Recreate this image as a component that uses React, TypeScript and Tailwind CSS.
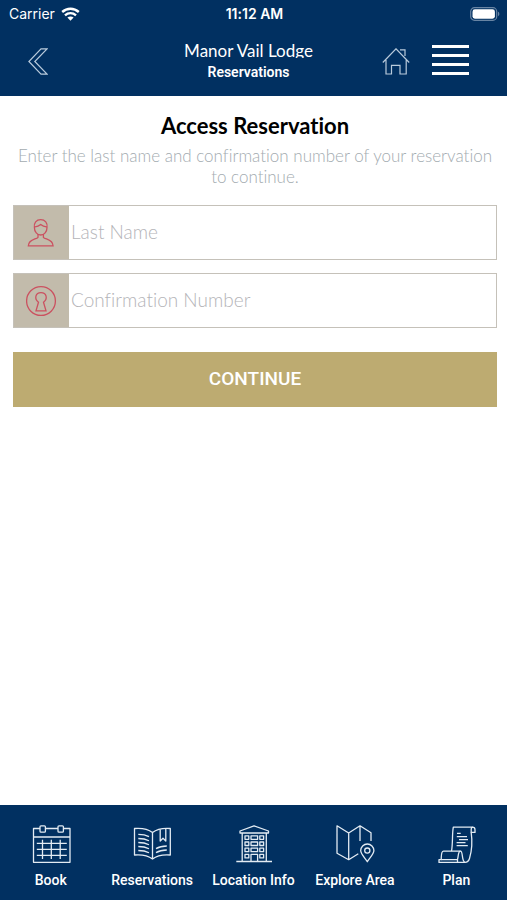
import type { ReactNode } from "react";
import { useState } from "react";

const tabs: { label: string; icon: ReactNode }[] = [
  {
    label: "Book",
    icon: (
      <>
        <path d="M9 4.5H2.5V38.3H39V4.5H32.5M14.5 4.5H27M2.5 13H39" />
        <rect x="9" y="1.8" width="5.4" height="6.4" rx="1" />
        <rect x="27" y="1.8" width="5.4" height="6.4" rx="1" />
        <path d="M11.5 15.8V35M20.3 15.8V35M29.2 15.8V35M5.8 19.3H35.8M5.8 25.4H35.8M5.8 31.4H35.8" />
      </>
    ),
  },
  {
    label: "Reservations",
    icon: (
      <>
        <path d="M20.5 8.5C16 5 9 4 2.5 4.5V31C9 30.5 16 31.5 20.5 35C25 31.5 32 30.5 38.3 31V4.5C32 4 25 5 20.5 8.5V35" />
        <path d="M6.3 10.3C10 10.3 14 11 17 12.6M6.3 14.5C10 14.5 14 15.2 17 16.8M6.3 18.5C10 18.5 14 19.2 17 20.8M6.3 22.5C10 22.5 14 23.2 17 24.8M6.3 26.5C10 26.5 14 27.2 17 28.8" />
        <path d="M28.2 5.5V17L31 14.2L33.8 17V4.6M24 24.6C27 22.8 31 22 34.8 22M24 28.6C27 26.8 31 26 34.8 26" />
      </>
    ),
  },
  {
    label: "Location Info",
    icon: (
      <>
        <path d="M7 9V7L21 1.8L35.5 7V9ZM9.2 9V37.3M33.3 9V37.3M3.3 37.5H39" />
        <path d="M12 11.8H15.8V15.3H12ZM18 11.8H24.6V15.3H18ZM26.8 11.8H30.6V15.3H26.8ZM12 18H15.8V21.5H12ZM18 18H24.6V21.5H18ZM26.8 18H30.6V21.5H26.8ZM12 24.2H15.8V27.7H12ZM18 24.2H24.6V27.7H18ZM26.8 24.2H30.6V27.7H26.8ZM12 30.4H15.8V33.9H12ZM26.8 30.4H30.6V33.9H26.8ZM18 37.3V30.4H24.6V37.3" />
      </>
    ),
  },
  {
    label: "Explore Area",
    icon: (
      <>
        <path d="M23.3 29.7L13.7 35.7L2 29.2V1.8L13.7 9L25 1.8L36 8.8V17M13.7 9V35.7M25 1.8V17" />
        <path d="M32.3 37.7C29.5 33.5 25.7 30 25.7 26.6A6.6 6.6 0 0 1 38.9 26.6C38.9 30 35 33.5 32.3 37.7Z" />
        <circle cx="32.3" cy="26.6" r="2.6" />
      </>
    ),
  },
  {
    label: "Plan",
    icon: (
      <>
        <path d="M15.5 27.2C17 19 16 10 17.3 3.2H36.5C38 3.2 39 4.2 39 5.8V8.4H35.2V5.6C35.2 4.2 35.6 3.2 36.8 3.2" />
        <path d="M35.2 8.4C36.5 18 35.5 28 33.5 34.5C32.6 37.3 31.4 38.4 29 38.4H3V35.6H5.2C5.4 31.5 5 27.2 7.5 27.2H24.5" />
        <path d="M5.2 35.6H21.5V38.4M21.5 35.6C22.5 32 22 27.2 24.5 27.2C27.2 27.2 25.4 37.5 29 38.4" />
        <path d="M21 9.3H24.7M20.8 12.7H31M23 15.6H32M20.6 18.6H29.5M20.6 21.6H31.8" />
      </>
    ),
  },
];

function StatusBar() {
  return (
    <div className="grid h-7 grid-cols-3 items-center pr-[7px] pl-[9px] font-['Inter',sans-serif] text-sm">
      <div className="flex items-center gap-1.5">
        <span>Carrier</span>
        <svg width="19" height="14" viewBox="0 0 19 14" fill="none" stroke="#fff" strokeWidth="2.4">
          <path d="M1.2 5C6 0.6 13 0.6 17.8 5M4 8.3C7.2 5.4 11.8 5.4 15 8.3" />
          <path d="M6.4 10.6C8.2 9 10.8 9 12.6 10.6L9.5 13.8Z" fill="#fff" stroke="none" />
        </svg>
      </div>
      <span className="text-center font-semibold">11:12 AM</span>
      <svg className="justify-self-end" width="30" height="14" viewBox="0 0 30 14" fill="none">
        <rect x="0.7" y="0.7" width="26" height="12.6" rx="3.8" stroke="#6884a3" strokeWidth="1.2" />
        <rect x="2.5" y="2.3" width="22.4" height="9.4" rx="2.4" fill="#fff" />
        <path d="M28 4.8C29.8 5.4 29.8 8.6 28 9.2Z" fill="#6884a3" />
      </svg>
    </div>
  );
}

function Header() {
  return (
    <header className="bg-[#013061] text-white">
      <StatusBar />
      <div className="grid h-[68px] grid-cols-[1fr_auto_1fr] items-center pr-[38px] pl-[28px]">
        <button type="button" aria-label="Back" className="justify-self-start">
          <svg width="20" height="28" viewBox="0 0 20 28" fill="none" stroke="#b9cadb" strokeWidth="1.2">
            <path d="M19 0.8H13L0.9 13.5L13 26.2H19L6.8 13.5Z" />
          </svg>
        </button>
        <div className="text-center">
          <p className="h-[15px] overflow-hidden font-['Lato',sans-serif] text-[17px] leading-4">Manor Vail Lodge</p>
          <h1 className="mt-1 font-['Roboto',sans-serif] text-sm leading-5 font-semibold">Reservations</h1>
        </div>
        <div className="flex items-center gap-[22px] justify-self-end">
          <button type="button" aria-label="Home">
            <svg width="28" height="28" viewBox="0 0 28 28" fill="none" stroke="#b9cadb" strokeWidth="1.2">
              <path d="M0.8 14.5L14 0.8L27.2 14.5M4 12V26H9.5V17.3H18V26H24.2V12M18 1.8H23V8" />
            </svg>
          </button>
          <button type="button" aria-label="Menu" className="mb-1 flex w-[37px] flex-col gap-1.5">
            <span className="h-[3px] w-full bg-white" />
            <span className="h-[3px] w-full bg-white" />
            <span className="h-[3px] w-full bg-white" />
            <span className="h-[3px] w-full bg-white" />
          </button>
        </div>
      </div>
    </header>
  );
}

type FieldProps = {
  id: string;
  label: string;
  value: string;
  onChange: (value: string) => void;
  children: ReactNode;
};

function Field({ id, label, value, onChange, children }: FieldProps) {
  return (
    <div className="flex h-[55px] border border-[#c5c1b9]">
      <label htmlFor={id} aria-label={label} className="flex w-[55px] shrink-0 items-center justify-center bg-[#c2bbab]">
        <svg width="32" height="32" viewBox="0 0 32 32" fill="none" stroke="#cb5160" strokeWidth="1.3">
          {children}
        </svg>
      </label>
      <input
        id={id}
        type="text"
        value={value}
        placeholder={label}
        onChange={(e) => onChange(e.target.value)}
        className="min-w-0 flex-1 px-0.5 text-[19px] text-[#444] outline-none placeholder:font-light placeholder:text-[#b4b4b8]"
      />
    </div>
  );
}

export default function App() {
  const [lastName, setLastName] = useState("");
  const [confirmation, setConfirmation] = useState("");

  return (
    <div className="flex min-h-screen flex-col bg-white font-['Lato',sans-serif] [font-variant-ligatures:none]">
      <Header />

      <main className="flex-1 pt-4 pr-[10px] pl-[13px]">
        <h2 className="text-center text-[22px] leading-7 font-bold text-black">Access Reservation</h2>
        <p className="mt-[5px] text-center text-[17px] leading-[21px] font-light text-[#a3abb0]">
          Enter the last name and confirmation number of your reservation to continue.
        </p>

        <form className="mt-[18px] flex flex-col gap-[13px]" onSubmit={(e) => e.preventDefault()}>
          <Field id="last-name" label="Last Name" value={lastName} onChange={setLastName}>
            <path d="M8.4 10.5C7.6 6 10.4 2.7 14.7 2.7C19 2.7 21.8 6 21 10.5C21 15 18.2 18 14.7 18C11.2 18 8.4 15 8.4 10.5ZM8.4 9.8C11 10 13 9 14.7 7.5C16.4 9 18.4 10 21 9.8" />
            <path d="M12 17V20.3C10.3 22.5 2.5 22 2.3 28.9H27.1C26.9 22 19.1 22.5 17.4 20.3V17" />
          </Field>
          <Field id="confirmation-number" label="Confirmation Number" value={confirmation} onChange={setConfirmation}>
            <circle cx="15" cy="16" r="14.4" />
            <path d="M12.5 17.3C8 14 9.3 7.6 15 7.6C20.7 7.6 22 14 17.5 17.3L20 25.8H10L12.5 17.3Z" />
          </Field>
          <button
            type="submit"
            className="mt-[11px] h-[55px] bg-[#bdab71] font-['Roboto',sans-serif] text-[19px] font-medium text-white"
          >
            CONTINUE
          </button>
        </form>
      </main>

      <nav className="grid h-[95px] grid-cols-5 bg-[#013061] pt-[19px] font-['Roboto',sans-serif] text-white">
        {tabs.map((tab) => (
          <a key={tab.label} href="#" className="flex flex-col items-center gap-1.5">
            <svg width="40" height="40" viewBox="0 0 40 40" fill="none" stroke="#e3ebf3" strokeWidth="1.3" strokeLinejoin="round">
              {tab.icon}
            </svg>
            <span className="text-sm leading-5 font-medium whitespace-nowrap">{tab.label}</span>
          </a>
        ))}
      </nav>
    </div>
  );
}
